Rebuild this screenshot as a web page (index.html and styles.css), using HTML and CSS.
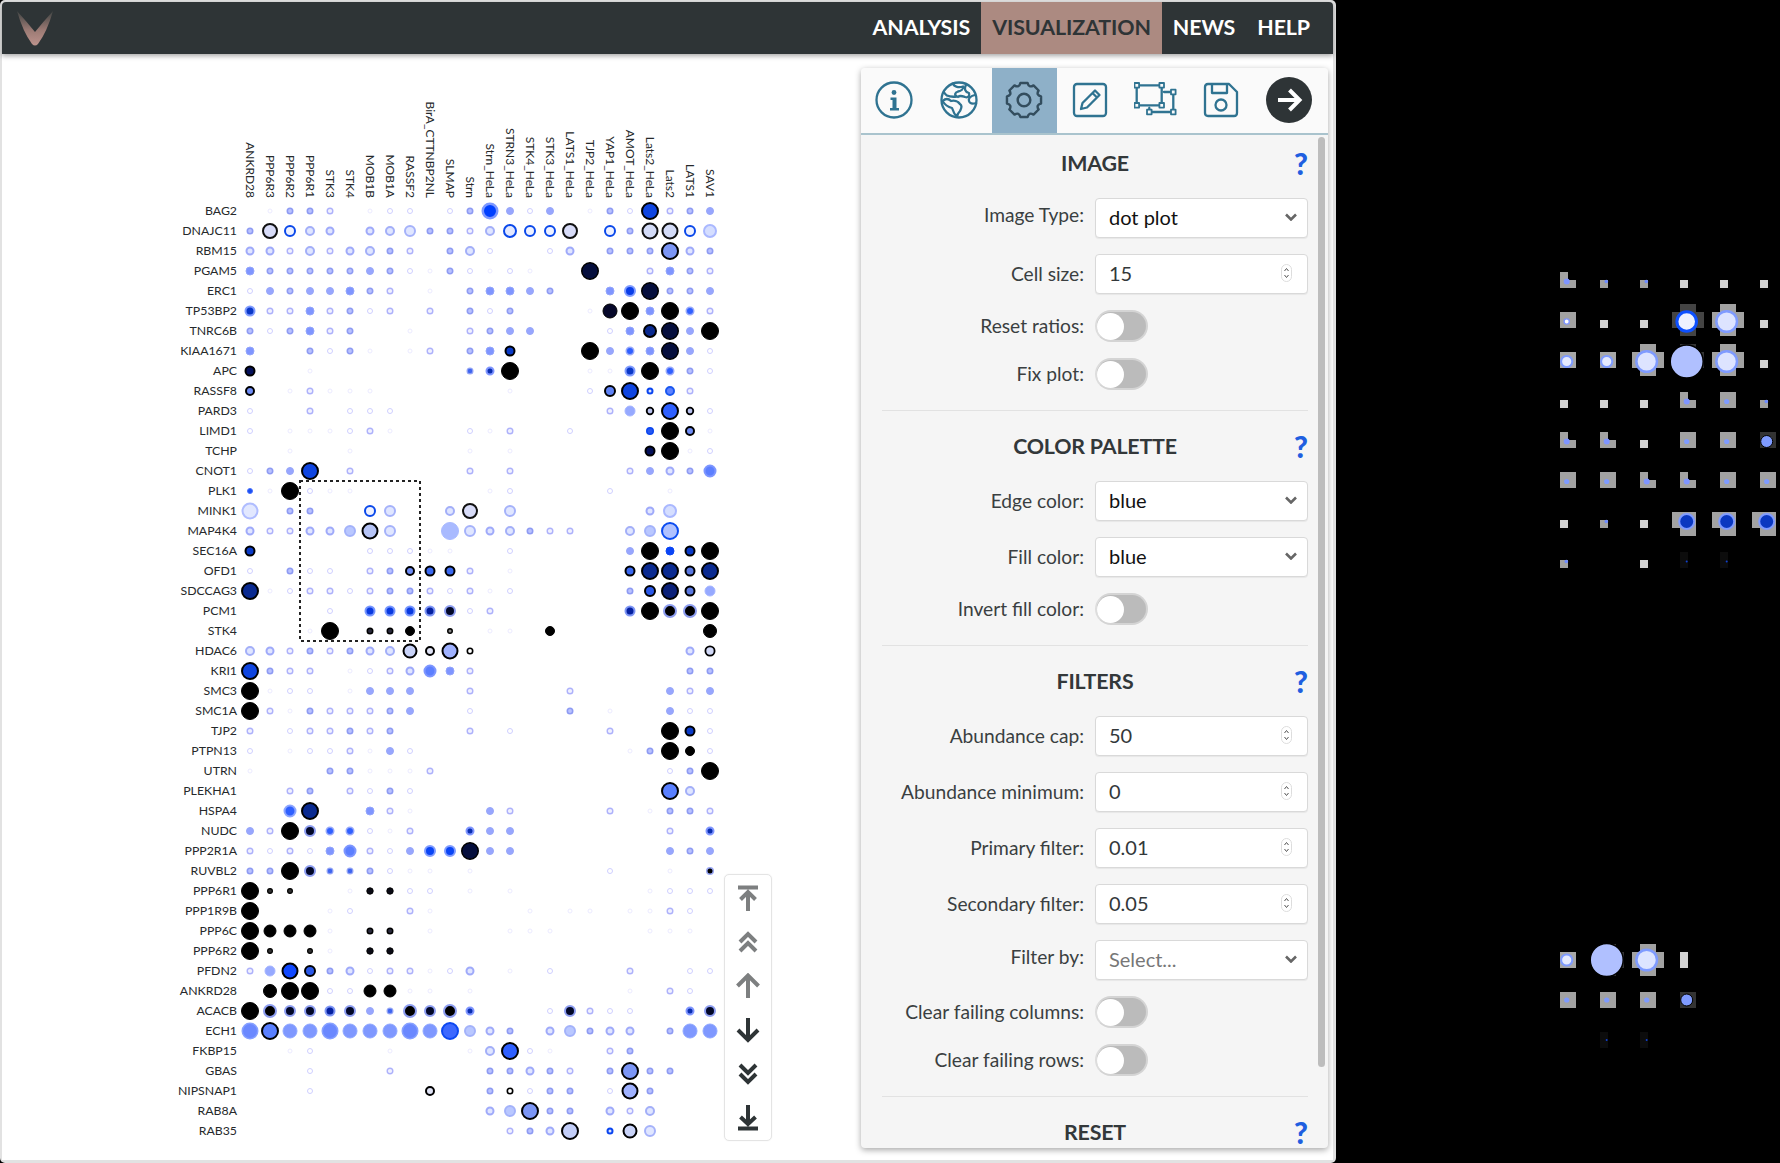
FILE: index.html
```html
<!DOCTYPE html>
<html lang="en">
<head>
<meta charset="utf-8">
<title>ProHits-viz</title>
<link rel="stylesheet" href="styles.css">
</head>
<body>
<div class="screen">
  <div class="window">
    <header class="topbar">
      <svg class="logo" viewBox="0 0 40 40" width="40" height="40">
        <defs><linearGradient id="logoGrad" x1="0" y1="0" x2="0" y2="1"><stop offset="0" stop-color="#3f4443"/><stop offset="0.55" stop-color="#9b7a74"/><stop offset="1" stop-color="#bd938c"/></linearGradient></defs>
        <path d="M1 3 Q11 14 19 24 Q27 14 37 3 Q31 24 22 36 Q19 39 16 36 Q7 24 1 3Z" fill="url(#logoGrad)"/>
      </svg>
      <nav class="nav">
        <a class="nav-item">ANALYSIS</a>
        <a class="nav-item nav-active">VISUALIZATION</a>
        <a class="nav-item">NEWS</a>
        <a class="nav-item">HELP</a>
      </nav>
    </header>
    <main class="content">
      <div class="plot-wrap">
        <svg class="plot" id="plot" viewBox="2 54 859 1105" width="859" height="1105">
          <g class="col-labels">
            <text transform="translate(245.5,198) rotate(90)">ANKRD28</text>
            <text transform="translate(265.5,198) rotate(90)">PPP6R3</text>
            <text transform="translate(285.5,198) rotate(90)">PPP6R2</text>
            <text transform="translate(305.5,198) rotate(90)">PPP6R1</text>
            <text transform="translate(325.5,198) rotate(90)">STK3</text>
            <text transform="translate(345.5,198) rotate(90)">STK4</text>
            <text transform="translate(365.5,198) rotate(90)">MOB1B</text>
            <text transform="translate(385.5,198) rotate(90)">MOB1A</text>
            <text transform="translate(405.5,198) rotate(90)">RASSF2</text>
            <text transform="translate(425.5,198) rotate(90)">BirA_CTTNBP2NL</text>
            <text transform="translate(445.5,198) rotate(90)">SLMAP</text>
            <text transform="translate(465.5,198) rotate(90)">Strn</text>
            <text transform="translate(485.5,198) rotate(90)">Strn_HeLa</text>
            <text transform="translate(505.5,198) rotate(90)">STRN3_HeLa</text>
            <text transform="translate(525.5,198) rotate(90)">STK4_HeLa</text>
            <text transform="translate(545.5,198) rotate(90)">STK3_HeLa</text>
            <text transform="translate(565.5,198) rotate(90)">LATS1_HeLa</text>
            <text transform="translate(585.5,198) rotate(90)">TJP2_HeLa</text>
            <text transform="translate(605.5,198) rotate(90)">YAP1_HeLa</text>
            <text transform="translate(625.5,198) rotate(90)">AMOT_HeLa</text>
            <text transform="translate(645.5,198) rotate(90)">Lats2_HeLa</text>
            <text transform="translate(665.5,198) rotate(90)">Lats2</text>
            <text transform="translate(685.5,198) rotate(90)">LATS1</text>
            <text transform="translate(705.5,198) rotate(90)">SAV1</text>
          </g>
          <g class="row-labels">
            <text x="237" y="214.6">BAG2</text>
            <text x="237" y="234.6">DNAJC11</text>
            <text x="237" y="254.6">RBM15</text>
            <text x="237" y="274.6">PGAM5</text>
            <text x="237" y="294.6">ERC1</text>
            <text x="237" y="314.6">TP53BP2</text>
            <text x="237" y="334.6">TNRC6B</text>
            <text x="237" y="354.6">KIAA1671</text>
            <text x="237" y="374.6">APC</text>
            <text x="237" y="394.6">RASSF8</text>
            <text x="237" y="414.6">PARD3</text>
            <text x="237" y="434.6">LIMD1</text>
            <text x="237" y="454.6">TCHP</text>
            <text x="237" y="474.6">CNOT1</text>
            <text x="237" y="494.6">PLK1</text>
            <text x="237" y="514.6">MINK1</text>
            <text x="237" y="534.6">MAP4K4</text>
            <text x="237" y="554.6">SEC16A</text>
            <text x="237" y="574.6">OFD1</text>
            <text x="237" y="594.6">SDCCAG3</text>
            <text x="237" y="614.6">PCM1</text>
            <text x="237" y="634.6">STK4</text>
            <text x="237" y="654.6">HDAC6</text>
            <text x="237" y="674.6">KRI1</text>
            <text x="237" y="694.6">SMC3</text>
            <text x="237" y="714.6">SMC1A</text>
            <text x="237" y="734.6">TJP2</text>
            <text x="237" y="754.6">PTPN13</text>
            <text x="237" y="774.6">UTRN</text>
            <text x="237" y="794.6">PLEKHA1</text>
            <text x="237" y="814.6">HSPA4</text>
            <text x="237" y="834.6">NUDC</text>
            <text x="237" y="854.6">PPP2R1A</text>
            <text x="237" y="874.6">RUVBL2</text>
            <text x="237" y="894.6">PPP6R1</text>
            <text x="237" y="914.6">PPP1R9B</text>
            <text x="237" y="934.6">PPP6C</text>
            <text x="237" y="954.6">PPP6R2</text>
            <text x="237" y="974.6">PFDN2</text>
            <text x="237" y="994.6">ANKRD28</text>
            <text x="237" y="1014.6">ACACB</text>
            <text x="237" y="1034.6">ECH1</text>
            <text x="237" y="1054.6">FKBP15</text>
            <text x="237" y="1074.6">GBAS</text>
            <text x="237" y="1094.6">NIPSNAP1</text>
            <text x="237" y="1114.6">RAB8A</text>
            <text x="237" y="1134.6">RAB35</text>
          </g>
          <g id="dots"></g>
          <rect class="selection" x="300" y="481" width="120" height="160"/>
        </svg>
        <div class="scroller">
          <svg class="scroll-icon muted" viewBox="0 0 26 26" width="26" height="26"><path d="M3 2.5H23M13 26V8M5.5 14.5L13 7L20.5 14.5"/></svg>
          <svg class="scroll-icon muted" viewBox="0 0 26 26" width="26" height="26"><path d="M5 13L13 5L21 13M5 22L13 14L21 22"/></svg>
          <svg class="scroll-icon muted" viewBox="0 0 26 26" width="26" height="26"><path d="M13 25V3M2.5 13L13 2.5L23.5 13"/></svg>
          <svg class="scroll-icon" viewBox="0 0 26 26" width="26" height="26"><path d="M13 1V23M3 13L13 23L23 13"/></svg>
          <svg class="scroll-icon" viewBox="0 0 26 26" width="26" height="26"><path d="M5 4L13 12L21 4M5 13L13 21L21 13"/></svg>
          <svg class="scroll-icon" viewBox="0 0 26 26" width="26" height="26"><path d="M13 0V18M5.5 12L13 19L20.5 12M3 23.5H23"/></svg>
        </div>
      </div>

      <aside class="panel">
        <div class="tabs">
          <div class="tab">
            <svg class="tab-icon" viewBox="0 0 38 38" width="38" height="38"><circle cx="19" cy="19" r="17.5"/><circle class="solid" cx="19" cy="11.5" r="2.4"/><path class="solid" d="M15.5 16.5h6v10.5h2.5v2.5h-9v-2.5h2.5v-8h-2z"/></svg>
          </div>
          <div class="tab">
            <svg class="tab-icon" viewBox="0 0 38 38" width="38" height="38"><circle cx="19" cy="19" r="17.5"/><path d="M13 2.5C14 6 19 7 23 5.5C24 8 21 10 18 10.5C15 11.5 14 14 17 15.5C13 16 10 16 7 14.5C5 13 4 11 3.5 11.5M2.5 20C6 17 9 18 11 20C14 19 18 20 20 23C23 25 21 28 20 30C18 32 17 34 17 36C14 33 13 30 12 27C8 26 5 24 2.5 20ZM26 3.5C24 8 25 11 29 12C30 15 28 17 25 16C22 15 20 14 18 16M35 14C31 15 28 17 29 20C30 23 33 23 36 22"/></svg>
          </div>
          <div class="tab tab-active">
            <svg class="tab-icon" viewBox="0 0 36 36" width="38" height="38"><path d="M14.57 1.86L21.43 1.86Q22.6 6.9 27 4.16L31.84 9Q29.1 13.4 34.14 14.57L34.14 21.43Q29.1 22.6 31.84 27L27 31.84Q22.6 29.1 21.43 34.14L14.57 34.14Q13.4 29.1 9 31.84L4.16 27Q6.9 22.6 1.86 21.43L1.86 14.57Q6.9 13.4 4.16 9L9 4.16Q13.4 6.9 14.57 1.86Z"/><circle cx="18" cy="18" r="6"/></svg>
          </div>
          <div class="tab">
            <svg class="tab-icon" viewBox="0 0 36 36" width="36" height="36"><rect x="2" y="2" width="32" height="32" rx="3"/><path d="M9 27L10.5 21L23 8.5L27.5 13L15 25.5ZM20.5 11L25 15.5"/></svg>
          </div>
          <div class="tab tab-group">
            <svg class="tab-icon" viewBox="0 0 44 36" width="44" height="36"><path d="M2.7 3.3H27.7V23.3H2.7ZM30 10H39.3V30H15.3V26"/><rect class="node" x="0.5" y="1" width="4.6" height="4.6"/><rect class="node" x="25.4" y="1" width="4.6" height="4.6"/><rect class="node" x="0.5" y="21" width="4.6" height="4.6"/><rect class="node" x="25.4" y="21" width="4.6" height="4.6"/><rect class="node" x="37" y="7.7" width="4.6" height="4.6"/><rect class="node" x="37" y="27.7" width="4.6" height="4.6"/><rect class="node" x="13" y="27.7" width="4.6" height="4.6"/></svg>
          </div>
          <div class="tab">
            <svg class="tab-icon" viewBox="0 0 36 36" width="36" height="36"><path d="M5 2H26L34 10V31Q34 34 31 34H5Q2 34 2 31V5Q2 2 5 2Z"/><path d="M9 2.5V11H24V2.5"/><circle cx="18" cy="23" r="5.5"/></svg>
          </div>
          <div class="tab tab-go">
            <span class="go-btn"><svg class="go-icon" viewBox="0 0 28 28" width="28" height="28"><path d="M3 14H24M14.5 4L24.5 14L14.5 24"/></svg></span>
          </div>
        </div>
        <div class="panel-body">
          <div class="thumb"></div>
          <section class="group">
            <div class="group-head"><span></span><h2>IMAGE</h2><span class="help">?</span></div>
            <div class="form">
              <div class="field-label raised">Image Type:</div>
              <div class="box"><span>dot plot</span><svg class="chev" viewBox="0 0 12 8" width="12" height="8"><path d="M1 1.5L6 6.5L11 1.5"/></svg></div>
              <div class="field-label">Cell size:</div>
              <div class="box"><span class="num">15</span><svg class="spin" viewBox="0 0 11 18" width="11" height="18"><rect x="0.5" y="0.5" width="10" height="17" rx="5"/><path d="M3.5 7L5.5 4.5L7.5 7M3.5 11L5.5 13.5L7.5 11"/></svg></div>
              <div class="field-label">Reset ratios:</div>
              <div class="toggle"><span class="knob"></span></div>
              <div class="field-label">Fix plot:</div>
              <div class="toggle"><span class="knob"></span></div>
            </div>
          </section>
          <section class="group">
            <div class="group-head"><span></span><h2>COLOR PALETTE</h2><span class="help">?</span></div>
            <div class="form">
              <div class="field-label">Edge color:</div>
              <div class="box"><span>blue</span><svg class="chev" viewBox="0 0 12 8" width="12" height="8"><path d="M1 1.5L6 6.5L11 1.5"/></svg></div>
              <div class="field-label">Fill color:</div>
              <div class="box"><span>blue</span><svg class="chev" viewBox="0 0 12 8" width="12" height="8"><path d="M1 1.5L6 6.5L11 1.5"/></svg></div>
              <div class="field-label">Invert fill color:</div>
              <div class="toggle"><span class="knob"></span></div>
            </div>
          </section>
          <section class="group">
            <div class="group-head"><span></span><h2>FILTERS</h2><span class="help">?</span></div>
            <div class="form">
              <div class="field-label">Abundance cap:</div>
              <div class="box"><span class="num">50</span><svg class="spin" viewBox="0 0 11 18" width="11" height="18"><rect x="0.5" y="0.5" width="10" height="17" rx="5"/><path d="M3.5 7L5.5 4.5L7.5 7M3.5 11L5.5 13.5L7.5 11"/></svg></div>
              <div class="field-label">Abundance minimum:</div>
              <div class="box"><span class="num">0</span><svg class="spin" viewBox="0 0 11 18" width="11" height="18"><rect x="0.5" y="0.5" width="10" height="17" rx="5"/><path d="M3.5 7L5.5 4.5L7.5 7M3.5 11L5.5 13.5L7.5 11"/></svg></div>
              <div class="field-label">Primary filter:</div>
              <div class="box"><span class="num">0.01</span><svg class="spin" viewBox="0 0 11 18" width="11" height="18"><rect x="0.5" y="0.5" width="10" height="17" rx="5"/><path d="M3.5 7L5.5 4.5L7.5 7M3.5 11L5.5 13.5L7.5 11"/></svg></div>
              <div class="field-label">Secondary filter:</div>
              <div class="box"><span class="num">0.05</span><svg class="spin" viewBox="0 0 11 18" width="11" height="18"><rect x="0.5" y="0.5" width="10" height="17" rx="5"/><path d="M3.5 7L5.5 4.5L7.5 7M3.5 11L5.5 13.5L7.5 11"/></svg></div>
              <div class="field-label raised">Filter by:</div>
              <div class="box"><span class="placeholder">Select...</span><svg class="chev" viewBox="0 0 12 8" width="12" height="8"><path d="M1 1.5L6 6.5L11 1.5"/></svg></div>
              <div class="field-label">Clear failing columns:</div>
              <div class="toggle"><span class="knob"></span></div>
              <div class="field-label">Clear failing rows:</div>
              <div class="toggle"><span class="knob"></span></div>
            </div>
          </section>
          <section class="group group-last">
            <div class="group-head"><span></span><h2>RESET</h2><span class="help">?</span></div>
          </section>
        </div>
      </aside>
    </main>
  </div>
  <div class="backdrop">
    <svg id="ghosts" viewBox="1336 0 444 1163" width="444" height="1163"></svg>
  </div>
</div>
<script src="plot.js"></script>
</body>
</html>
```

FILE: styles.css
```css
* { box-sizing: border-box; }
html, body { margin: 0; padding: 0; }
body { width: 1780px; height: 1163px; overflow: hidden; background: #000; font-family: "Lato", "Open Sans", sans-serif; color: #33383a; }

.screen { display: flex; width: 1780px; height: 1163px; }
.window { width: 1336px; height: 1163px; padding: 2px 3px 3px 2px; background: #e2e2e2; border-radius: 5px; display: flex; flex-direction: column; flex: none; }
.backdrop { flex: 1; background: #000; }

.topbar { height: 52px; flex: none; display: flex; align-items: center; justify-content: space-between; padding-left: 14px; padding-right: 12px; background: #2e3436; border-radius: 4px 4px 0 0; box-shadow: 0 2px 5px rgba(0,0,0,.35); position: relative; z-index: 2; }
.logo { display: block; }
.nav { display: flex; height: 100%; }
.nav-item { display: flex; align-items: center; padding: 0 11px 2px; color: #fff; font-size: 21.4px; font-weight: 700; letter-spacing: -0.1px; }
.nav-active { background: #ac8a81; color: #2e3436; }

.content { flex: 1; display: flex; background: #fff; min-height: 0; }
.plot-wrap { width: 859px; height: 1105px; flex: none; position: relative; }
.plot { display: block; }
.plot text { font-family: "Lato", sans-serif; fill: #26292b; }
.row-labels text { text-anchor: end; font-size: 12.3px; }
.col-labels text { text-anchor: end; font-size: 12px; }
.selection { fill: none; stroke: #222; stroke-width: 2; stroke-dasharray: 3 3; }

.scroller { position: absolute; left: 722px; top: 820px; width: 48px; height: 267px; padding: 1px 0; background: #fff; border: 1px solid #e4e4e4; border-radius: 5px; display: grid; grid-template-rows: repeat(6, 44px); justify-items: center; align-items: center; box-shadow: 0 0 2px rgba(0,0,0,.06); }
.scroll-icon { display: block; fill: none; stroke: #2e3436; stroke-width: 4; }
.scroll-icon.muted { stroke: #7d7f80; }

.panel { width: 467px; height: 1080px; margin-top: 14px; margin-left: 0; flex: none; background: #f5f5f5; display: flex; flex-direction: column; border-radius: 4px; box-shadow: 0 2px 6px rgba(0,0,0,.35); }
.tabs { height: 67px; flex: none; display: flex; background: #fafafa; border-bottom: 2px solid #a9c3cd; border-radius: 4px 4px 0 0; }
.tab { width: 65.4px; flex: none; display: flex; align-items: center; justify-content: center; padding-bottom: 2px; }
.tab-active { background: #8eb0c8; }
.tab-group { padding-left: 2px; }
.tab-go { flex: 1; width: auto; padding-right: 4px; }
.tab-icon { display: block; fill: none; stroke: #2f7391; stroke-width: 2.3; stroke-linejoin: round; stroke-linecap: round; }
.tab-icon .solid { fill: #2f7391; stroke: none; }
.tab-icon .node { fill: #fafafa; stroke-width: 1.8; }
.tab-active .tab-icon { stroke: #334d5e; }
.go-btn { width: 46px; height: 46px; border-radius: 50%; background: #2e3436; display: flex; align-items: center; justify-content: center; }
.go-icon { display: block; fill: none; stroke: #fff; stroke-width: 4; }

.panel-body { flex: 1; position: relative; }
.thumb { position: absolute; right: 3px; top: 2px; width: 7px; height: 930px; border-radius: 4px; background: #bdbdbd; }
.group { margin: 0 20px 0 21px; padding: 20px 0; border-bottom: 1px solid #e2e2e2; }
.group:first-of-type { padding-top: 13px; }
.group-last { border-bottom: 0; padding-bottom: 0; }
.group-head { height: 30px; display: grid; grid-template-columns: 1fr auto 1fr; align-items: center; }
.group-head h2 { margin: 0; font-size: 21.4px; font-weight: 700; color: #33383a; letter-spacing: -0.2px; }
.help { justify-self: end; font-size: 30px; font-weight: 900; color: #1f5fe0; line-height: 30px; }
.form { margin-top: 20px; display: grid; grid-template-columns: 202px 213px; column-gap: 11px; row-gap: 16px; align-items: center; }
.field-label { text-align: right; font-size: 19.2px; color: #3a3f41; padding-bottom: 2px; }
.field-label.raised { padding-bottom: 7px; }
.box { height: 40px; background: #fff; border: 1px solid #d9d9d9; border-radius: 4px; box-shadow: 0 1px 1px rgba(0,0,0,.06); display: flex; align-items: center; justify-content: space-between; padding: 0 10px 2px 13px; font-size: 20px; color: #111; }
.num { color: #33383a; }
.placeholder { color: #777; }
.chev { display: block; fill: none; stroke: #666; stroke-width: 2.6; }
.spin { display: block; margin-right: 5px; }
.spin rect { fill: #fff; stroke: #ddd; }
.spin path { fill: none; stroke: #555; stroke-width: 1; }
.toggle { width: 53px; height: 32px; border-radius: 16px; background: #bbb; border: 2px solid #d4d4d4; border-left-color: #ddd; padding: 0; display: flex; align-items: center; }
.knob { width: 27px; height: 27px; border-radius: 50%; background: #fff; display: block; }
```

FILE: plot.js
```js
// Dot plot data: one string per row, one symbol per column ("." = no dot).
var ROWS = [
".addc.abb.bdBebe.adbocde","dpqgf.fghddcgQqqp.qdPPqH","ffcgcfgdc.dgb..bf.dddrfd","idddddedbadbaba..m..cidc",
"bedeeidc.a.diied..itmdde","zccicdbc.c.dbd...aLkikuc","dbdicd..a..cdee...biSmek","i..dbda.ac.div...keuimeb",
"w..a.......xyk...aazkudb","A.acaaa......a...bDoEFc.","b..c.bbb..........cJGIGb","b.aaabca...bac..b...MkAa",
"..a..a.....a.a......wkab","bdeo.c.....c.c.....cefdT","Uakbaa......ab....b..a..","V.dd..qh..gp.h......fH..",
"fccffWXh..Yhfgdcc..gWZ..","v.....bbbaa..b.....ek0vk","b.dbb.cdA11c.a.....1nn2n","nabccbcddcbcab.....d3N2J",
"....b.44456bc......5k77k","...ak.889.!.aa.9.......K","gfcdcdfg@#s$..........f%","odcc.abcfTic..........dd",
"kabb.aeee..c....c....ece","kcadcccde..b....d.a..ebb","c.bccdcd...c.b....c..kvb","b.abbcaeb..........adk9b",
"a...ddaaac...........bdk","..cd.cbdb............Rg.","..^n..ica...ec....c.addc","eck6uubac..yee.......c.y",
"cbcbiTcbeCCmee.......ede","ddk6xxdbaa.a......b..a.&","k((..a))bb.a.a......abbb","k...ab..ca....a.aa.aacb.",
"kllla.88.a...aaa....aaa.","k(.(a.))................","cJ+3dfbccabf.a.b...c..bb",".Kkkbbllaa.a.......a.cb.",
"k76656ex767y...b6cbb..y6","[R]][]]][]{Wfd.fWdff.d]]","..ab...a...agIba..cd....","...b...c....ddfdc.drdd..",
"...b.....#..d$bdd.bsd...","............fWrdd.fcg...",".............cdf*.E@h..."
];
// symbol: [outer radius, fill, edge, edge width]
var T = {
a:[2.5,'#fff','#ecebff',1], b:[3,'#fff','#cfd0ff',1], c:[3.5,'#f0f1ff','#aeb2fb',1.4], d:[3.5,'#b9c2ff','#8e9bf3',1.6],
e:[4,'#97a6ff','#97a6f8',1], f:[4.5,'#e0e5ff','#9faafa',2], g:[5,'#dfe5ff','#a3aff8',2], h:[6,'#e0e6ff','#a5b2fa',2],
H:[7,'#d5deff','#aab8ff',2], V:[8.5,'#e2e8ff','#b0bdff',2], i:[4.5,'#7f95ff','#93a5fb',1], J:[5.5,'#96a9ff','#a5b5ff',1],
W:[6,'#b9c7ff','#a3b2fa',2], T:[6.5,'#5c7fff','#7d96ff',2], '^':[6.5,'#2f60ff','#8ca5ff',2], Y:[9,'#a9baff','#a9baff',1],
s:[8.5,'#a0b2ff','#000',2], '[':[8.5,'#6a88ff','#86a0ff',1.5], ']':[7.5,'#7f98ff','#8fa8ff',1], '{':[9,'#3d68ff','#0d48f0',2],
B:[8.5,'#0040ff','#7d98ff',2.5], C:[6,'#0a45f5','#7f9bff',2], t:[6,'#0a3ee8','#7f9bff',2], z:[5.5,'#0a38c8','#7f9bff',2],
x:[3.5,'#3f66ef','#93a3f5',1.2], u:[4.5,'#3060ff','#97a8fb',1.5], y:[4.5,'#0a2fb0','#7f95ff',2],
4:[5.5,'#0a3ae0','#7595ff',2], 5:[5.5,'#0520a0','#7d95f5',2], 6:[6,'#020828','#8d9df0',2], 7:[7,'#000','#8d9df0',2],
'&':[4,'#000','#9aa8f5',1.5], 0:[4.5,'#0a45f5','#0a45f5',1], U:[3,'#1a50f0','#4a70ff',1],
k:[9,'#000','#000',1], K:[7,'#000','#000',1], l:[6.5,'#000','#000',1], 9:[5,'#000','#000',1], ')':[3.7,'#0a0a14','#000',1],
'(':[3,'#333','#000',1.2], 8:[3.5,'#2a2a3c','#000',1.5], '!':[3,'#888','#000',1.5], '$':[3.5,'#fff','#000',1.6],
'#':[5,'#dfe2f5','#000',2], G:[4.2,'#b8c0ee','#000',1.8], '%':[5.5,'#d2d9f7','#000',1.8], '@':[7.5,'#c9d3f8','#000',2],
'*':[9,'#c3cef8','#000',2],
p:[8,'#d8dcf8','#111',2], P:[8.5,'#d4dcf8','#111',2], X:[8.5,'#b6c4f6','#000',2], S:[7,'#0a2a90','#000',2],
m:[9,'#050e3c','#000',1.5], L:[7.5,'#06082a','#000',1], n:[9,'#0a2a90','#000',2], N:[9,'#0a2078','#000',2],
o:[9,'#0f45e0','#000',2], r:[9,'#7c96f5','#000',2], I:[9,'#2f60ff','#000',2], R:[9,'#5a80ff','#000',2], D:[6,'#5f82f5','#000',2],
A:[5,'#6f8cf5','#000',2], 1:[5.5,'#3a68f0','#000',2], 2:[5.5,'#5a78e0','#000',2], 3:[6,'#2a58e8','#000',2],
'+':[8.5,'#1048ff','#000',2], v:[5.5,'#0a3ac8','#000',2], w:[5.5,'#04105a','#000',2],
M:[4,'#2858f0','#0a45f0',1.5], E:[3.5,'#dbe4ff','#0a45f0',2], F:[5,'#5f82ff','#1a58f0',2],
q:[6,'#eef1ff','#0a48ea',2], Q:[7,'#e2e8ff','#0a48ea',2], Z:[9,'#b0c2ff','#0c4cf0',2]
};
function circle(x, y, r, fill, edge, w) {
  return '<circle cx="' + x + '" cy="' + y + '" r="' + r + '" fill="' + fill + '"' +
    (edge ? ' stroke="' + edge + '" stroke-width="' + w + '"' : '') + '/>';
}
var html = '';
ROWS.forEach(function (row, r) {
  for (var c = 0; c < row.length; c++) {
    var t = T[row.charAt(c)];
    if (t) html += circle(250 + 20 * c, 211 + 20 * r, t[0] - t[3] / 2, t[1], t[2], t[3]);
  }
});
document.getElementById('dots').innerHTML = html;

// Fragments of the plot left over on the backdrop.
function rect(x, y, w, h, fill) { return '<rect x="' + x + '" y="' + y + '" width="' + w + '" height="' + h + '" fill="' + fill + '"/>'; }
function plus(x, y, fill) { return rect(x - 8, y, 32, 16, fill) + rect(x, y - 8, 16, 32, fill); }
var G = {
  L: function (x, y, o) { return '<path d="M' + x + ' ' + y + 'h8v8h8v8h-16z" fill="#a2a2a2"/>' + circle(x + 6.7, y + o, 3, '#7f95ff'); },
  b: function (x, y) { return rect(x, y + 8, 8, 8, '#d2d2d2'); },
  c: function (x, y, o) { return rect(x, y + 8, 8, 8, '#a2a2a2') + circle(x + 6.3, y + o, 1.8, '#6f8cff'); },
  d: function (x, y, o) { return rect(x, y, 16, 16, '#a2a2a2') + circle(x + 6.7, y + o, 2.6, '#7f9bff'); },
  r: function (x, y, o) { return rect(x, y, 16, 16, '#a2a2a2') + circle(x + 6.7, y + o, 2.6, '#fff', '#7f95ff', 1.4); },
  w: function (x, y, o) { return rect(x, y, 16, 16, '#a8a8a8') + circle(x + 6.7, y + o, 5.6, '#e6ebff', '#7f9bff', 2); },
  P: function (x, y, o) { return plus(x, y, '#a2a2a2') + circle(x + 6.7, y + o, 10.3, '#dde4ff', '#7f9bff', 2.5); },
  R: function (x, y, o) { return plus(x, y, '#444') + circle(x + 6.7, y + o, 9.8, '#eef2ff', '#0d50ff', 3); },
  X: function (x, y, o) { return plus(x, y, '#333') + circle(x + 6.7, y + o, 16.5, '#b0c0ff', '#000', 1.5); },
  n: function (x, y, o) { return rect(x, y, 16, 16, '#333') + circle(x + 6.7, y + o, 6, '#7f9bff', '#000', 1); },
  N: function (x, y, o) { return rect(x - 8, y, 24, 16, '#a2a2a2') + rect(x, y + 16, 16, 8, '#a2a2a2') + circle(x + 6.7, y + o, 7.5, '#0a38c0', '#7f9bff', 2); },
  t: function (x, y, o) { return rect(x, y, 8, 16, '#0c0c0c') + circle(x + 6.7, y + o, 1, '#1040d0'); },
  T: function (x, y) { return rect(x, y, 8, 16, '#d2d2d2'); }
};
var BLOCKS = [
  [272, 9.5, ["Lccbbb", "rbbRPb", "wwPXPb", "bbbLdc", "LLbddn", "ddLLdd", "bcbNNN", "c.btt."]],
  [952, 8, ["wXPT", "dddn", ".tt."]]
];
var g = '';
BLOCKS.forEach(function (b) {
  b[2].forEach(function (row, j) {
    for (var i = 0; i < row.length; i++) {
      var p = G[row.charAt(i)];
      if (p) g += p(1560 + 40 * i, b[0] + 40 * j, b[1]);
    }
  });
});
document.getElementById('ghosts').innerHTML = g;
```
